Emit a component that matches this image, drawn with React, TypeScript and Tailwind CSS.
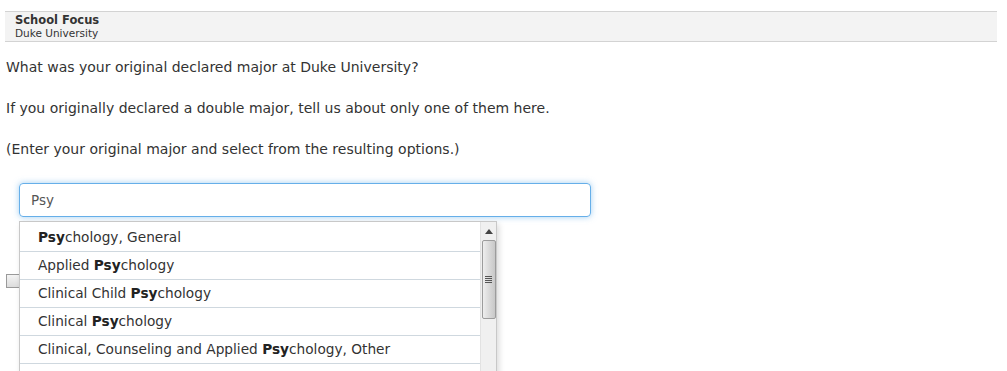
import React from "react";

const options = [
  ["", "Psy", "chology, General"],
  ["Applied ", "Psy", "chology"],
  ["Clinical Child ", "Psy", "chology"],
  ["Clinical ", "Psy", "chology"],
  ["Clinical, Counseling and Applied ", "Psy", "chology, Other"],
];

const App = () => {
  return (
    <div className="w-[1007px] h-[371px] overflow-hidden bg-white text-[#333] font-['DejaVu_Sans',Verdana,sans-serif]">
      <div className="pt-[11px] pl-[5px] pr-[10px]">
        <div className="bg-[#f3f3f3] border-y border-[#d3d3d3] h-[31px] pl-[10px] pt-[1px]">
          <div className="text-[11.5px] font-bold leading-[14px] text-[#333]">School Focus</div>
          <div className="text-[10.5px] leading-[13px] text-[#333]">Duke University</div>
        </div>
      </div>

      <div className="pl-[6px] text-[14px] leading-[16px]">
        <p className="mt-[17px]">What was your original declared major at Duke University?</p>
        <p className="mt-[25px]">If you originally declared a double major, tell us about only one of them here.</p>
        <p className="mt-[25px]">(Enter your original major and select from the resulting options.)</p>
      </div>

      <div className="relative mt-[26px]">
        <div className="pl-[19px]">
          <div className="w-[572px] h-[34px] rounded-[4px] border border-[#66afe9] shadow-[0_0_6px_rgba(102,175,233,0.6)] flex items-center pl-[11px] text-[13.5px] text-[#555]">
            Psy
          </div>
        </div>

        <div className="pl-[6px] mt-[57px] flex">
          <div className="w-[14px] h-[14px] border border-[#9a9a9a] bg-gradient-to-b from-[#f4f4f4] to-[#dcdcdc]" />
        </div>

        <div className="absolute left-[19px] top-[38px] w-[478px] h-[160px] bg-white border border-[#c8c8c8] shadow-[2px_3px_6px_rgba(0,0,0,0.15)] flex">
          <ul className="flex-1 pt-[2px]">
            {options.map((o, i) => (
              <li
                key={i}
                className="h-[28px] flex items-center pl-[18px] border-b border-[#cfd8df] text-[13.7px] text-[#333]"
              >
                <span className="whitespace-pre">
                  {o[0]}
                  <span className="font-bold text-[#222]">{o[1]}</span>
                  {o[2]}
                </span>
              </li>
            ))}
            <li className="h-[28px]" />
          </ul>
          <div className="w-[16px] bg-[#f0f0f0] border-l border-[#e2e2e2] flex flex-col items-center">
            <svg width="8" height="5" viewBox="0 0 8 5" className="mt-[7px]">
              <path d="M4 0 L8 5 L0 5 Z" fill="#444" />
            </svg>
            <div className="mt-[6px] w-[14px] h-[79px] rounded-[2px] border border-[#9c9c9c] bg-gradient-to-r from-[#eeeeee] via-[#dadada] to-[#c8c8c8] flex items-center justify-center">
              <svg width="7" height="7" viewBox="0 0 7 7">
                <path d="M0 0.5h7M0 2.5h7M0 4.5h7M0 6.5h7" stroke="#555" strokeWidth="1" />
              </svg>
            </div>
          </div>
        </div>
      </div>
    </div>
  );
};

export default App;
